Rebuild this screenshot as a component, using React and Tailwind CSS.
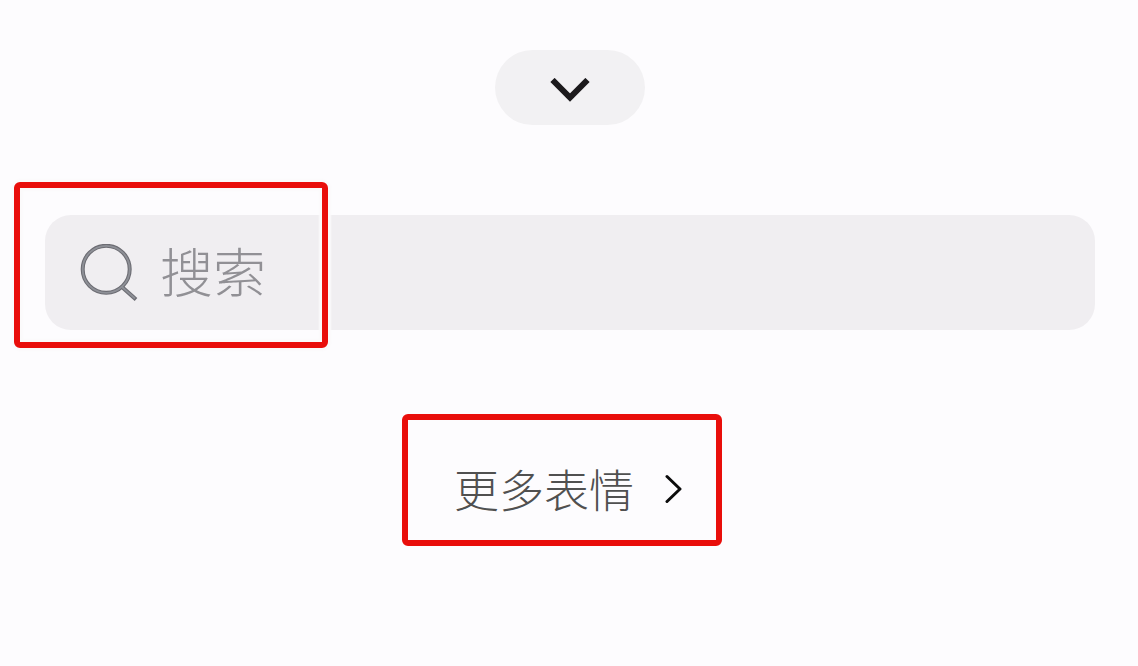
const ChevronDown = () => (
  <svg width="40" height="24" viewBox="0 0 40 24" fill="none">
    <path d="M2.5 2L20 19.5L37.5 2" stroke="#1c1a1c" strokeWidth="6" />
  </svg>
);

const ChevronRight = () => (
  <svg width="18" height="30" viewBox="0 0 18 30" fill="none">
    <path
      d="M2 2.5L15 15L2 27.5"
      stroke="#0c0c0c"
      strokeWidth="3"
      strokeLinecap="round"
      strokeLinejoin="round"
    />
  </svg>
);

const SearchIcon = () => (
  <svg width="58" height="58" viewBox="0 0 58 58" fill="none">
    <circle cx="26.2" cy="25.3" r="23.5" stroke="#6c6c73" strokeWidth="4" />
    <path d="M42 43L56 55.5" stroke="#6c6c73" strokeWidth="4" />
    {/* lighter core of the outline */}
    <circle cx="26.2" cy="25.3" r="23.5" stroke="#8e9097" strokeWidth="1.8" />
    <path d="M42 43L55 54.5" stroke="#8e9097" strokeWidth="1.8" />
  </svg>
);

export default function App() {
  return (
    <div className="relative flex h-[666px] w-[1138px] flex-col items-center overflow-hidden bg-[#fdfcfe] pt-[50px] font-['Noto_Sans_CJK_SC',sans-serif]">
      <button className="ml-[2px] flex h-[75px] w-[150px] shrink-0 items-center justify-center rounded-full bg-[#f2f1f3] pt-[5px]">
        <ChevronDown />
      </button>

      <div className="ml-[2px] mt-[90px] flex h-[115px] w-[1050px] shrink-0 items-center rounded-[26px] bg-[#f0eef1] pl-[35px]">
        <SearchIcon />
        <span className="mb-[5px] ml-[22px] text-[53px] font-light leading-none text-[#919095]">搜索</span>
      </div>

      <button className="mt-[84px] mr-[14px] flex h-[132px] w-[320px] shrink-0 items-center rounded-[6px] border-[6px] border-[#e90e0b] pl-[46px] pt-[17px]">
        <span className="text-[45px] font-light leading-none text-[#505050]">更多表情</span>
        <span className="ml-[31px]">
          <ChevronRight />
        </span>
      </button>

      {/* highlight over the search field, with a pale halo on both sides of the line */}
      <div className="absolute left-[14px] top-[182px] h-[166px] w-[314px] rounded-[6px] border-[6px] border-[#e90e0b] shadow-[0_0_2px_3px_#fbfafb,inset_0_0_2px_3px_#fbfafb]" />
    </div>
  );
}
